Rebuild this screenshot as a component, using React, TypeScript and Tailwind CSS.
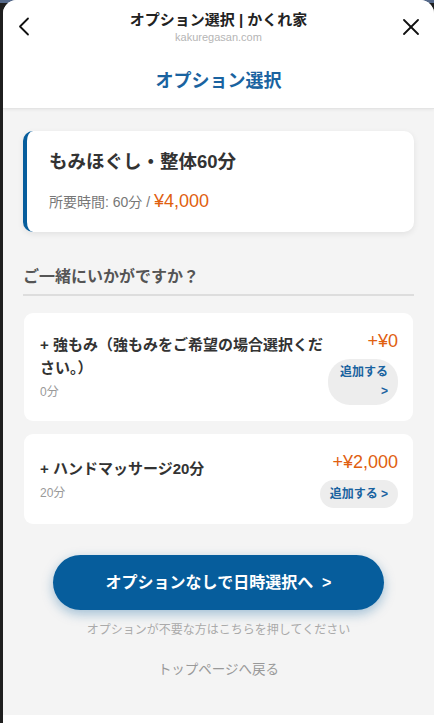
import React from 'react';

type Option = {
  name: string;
  minutes: number;
  price: string;
  narrow?: boolean;
};

const options: Option[] = [
  { name: '+ 強もみ（強もみをご希望の場合選択ください。）', minutes: 0, price: '+¥0', narrow: true },
  { name: '+ ハンドマッサージ20分', minutes: 20, price: '+¥2,000' },
];

const OptionCard: React.FC<{ option: Option }> = ({ option }) => (
  <div className="bg-white rounded-[9px] pl-[16px] pr-[15px] py-[16px] flex items-center justify-between gap-[3px]">
    <div className="flex-1 min-w-0">
      <div className="text-[15px] leading-[23px] font-bold text-[#333]">{option.name}</div>
      <div className="mt-[4px] text-[12px] leading-[18px] text-[#999]">{option.minutes}分</div>
    </div>
    <div className="flex flex-col items-end shrink-0">
      <div className="text-[18px] leading-[24px] font-medium text-[#e0600f]">{option.price}</div>
      <button
        className={
          option.narrow
            ? 'mt-[6px] w-[70px] bg-[#ededed] rounded-[22px] pl-[12px] pr-[10px] py-[4px] text-right text-[12px] leading-[19px] font-bold text-[#1a63a0]'
            : 'mt-[6px] bg-[#ededed] rounded-full px-[10px] py-[5px] text-[12px] leading-[18px] font-bold text-[#1a63a0] whitespace-nowrap'
        }
      >
        追加する &gt;
      </button>
    </div>
  </div>
);

const App: React.FC = () => {
  return (
    <div
      className="w-[434px] h-[723px] bg-[#1f1f1f] flex flex-col overflow-hidden"
      style={{ fontFamily: '"Liberation Sans", "Noto Sans CJK JP", sans-serif' }}
    >
      {/* page behind the sheet */}
      <div className="h-[3px] bg-[#55698a] shrink-0"></div>

      <div className="flex-1 ml-[3px] -mt-[3px] bg-white rounded-t-[14px] flex flex-col overflow-hidden">
        {/* Sheet header */}
        <header className="relative bg-white pt-[10px] pb-[15px] border-b border-[#e4e4e4] shadow-[0_1px_3px_rgba(0,0,0,0.06)] shrink-0">
          <svg width="12" height="19" viewBox="0 0 12 19" className="absolute left-[15px] top-[17px]" fill="none" stroke="#111" strokeWidth="1.8" strokeLinecap="round" strokeLinejoin="round">
            <polyline points="10,1.5 2,9.5 10,17.5" />
          </svg>
          <svg width="16" height="16" viewBox="0 0 16 16" className="absolute right-[15px] top-[19px]" fill="none" stroke="#111" strokeWidth="1.8" strokeLinecap="round">
            <line x1="1" y1="1" x2="15" y2="15" />
            <line x1="15" y1="1" x2="1" y2="15" />
          </svg>
          <div className="text-center text-[15px] leading-[20px] font-bold text-[#222]">オプション選択 | かくれ家</div>
          <div className="text-center text-[11px] leading-[14px] text-[#b5b5b5]">kakuregasan.com</div>
          <h1 className="mt-[25px] text-center text-[18px] leading-[24px] font-bold text-[#1a63a0]">オプション選択</h1>
        </header>

        {/* Content */}
        <main className="flex-1 bg-[#f4f4f4] px-[20px] pt-[22px]">
          <div className="bg-white rounded-[10px] border-l-4 border-[#065d9c] pl-[22px] pr-[20px] py-[18px] shadow-[0_2px_6px_rgba(0,0,0,0.08)]">
            <div className="text-[18.5px] leading-[26px] font-semibold text-[#333]">もみほぐし・整体60分</div>
            <div className="mt-[14px] leading-[24px] flex items-baseline">
              <span className="text-[14px] text-[#777]">所要時間: 60分 /&nbsp;</span>
              <span className="text-[18px] font-medium text-[#e0600f]">¥4,000</span>
            </div>
          </div>

          <h2 className="mt-[33px] pb-[5px] border-b-2 border-[#dddddd] text-[16px] leading-[24px] font-bold text-[#555]">
            ご一緒にいかがですか？
          </h2>

          <div className="mt-[17px] flex flex-col gap-[13px] px-[1px]">
            {options.map((o, i) => (
              <OptionCard key={i} option={o} />
            ))}
          </div>

          <div className="mt-[31px] flex flex-col items-center">
            <button className="w-[331px] h-[55px] rounded-full bg-[#065d9c] text-white text-[16px] font-bold shadow-[0_4px_12px_rgba(6,93,156,0.35)]">
              オプションなしで日時選択へ &nbsp;&gt;
            </button>
            <p className="mt-[11px] text-[12px] leading-[18px] text-[#aaaaaa]">オプションが不要な方はこちらを押してください</p>
            <a className="mt-[21px] text-[13.5px] leading-[20px] text-[#999]">トップページへ戻る</a>
          </div>
        </main>
        <div className="h-[8px] bg-white shrink-0"></div>
      </div>
    </div>
  );
};

export default App;
